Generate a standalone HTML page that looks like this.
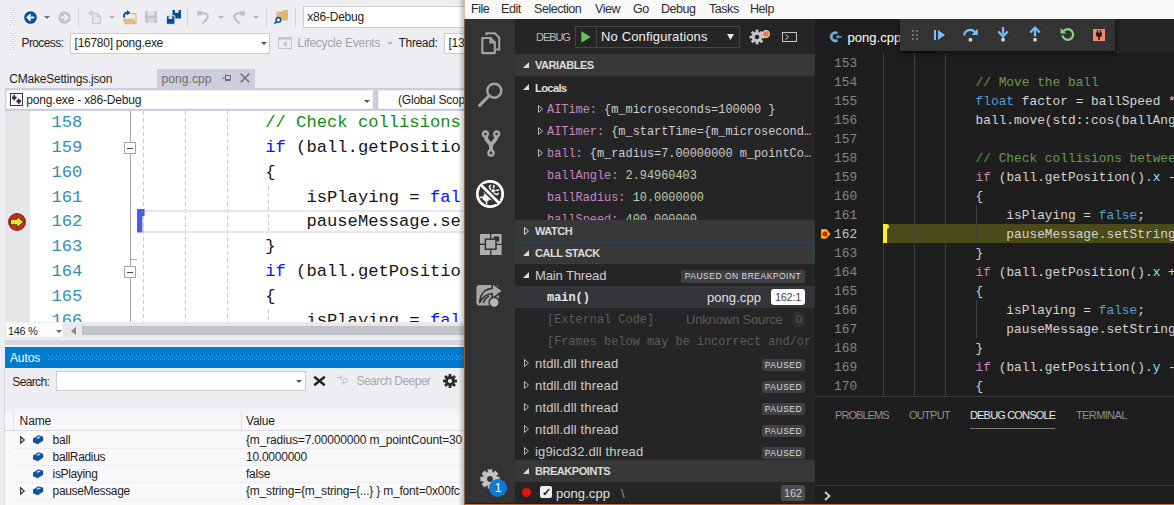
<!DOCTYPE html>
<html><head><meta charset="utf-8"><title>Debug</title>
<style>
*{box-sizing:border-box;margin:0;padding:0}
html,body{width:1174px;height:505px;overflow:hidden;background:#eeeef2}
body{position:relative;font-family:"Liberation Sans",sans-serif;font-size:12px;color:#1e1e1e}
.a{position:absolute;white-space:nowrap}
svg{position:absolute;overflow:visible}
.mono{font-family:"Liberation Mono",monospace}
/* ---------- Visual Studio (left) ---------- */
#vs{left:0;top:0;width:465px;height:505px;background:#eeeef2;overflow:hidden}
.vst{font-size:12px;letter-spacing:-0.35px;color:#1e1e1e;line-height:16px}
.combo{background:#fff;border:1px solid #ccced0}
.vsl{font-family:"Liberation Mono",monospace;font-size:17.17px;line-height:24.75px;height:24.75px;left:0;width:465px}
.vsl .n{position:absolute;left:47px;color:#3590ae}
.vsl .c{position:absolute;left:137.2px;white-space:pre;color:#151515}
.kw{color:#1010f0}.cm{color:#138a13}
/* ---------- VS Code (right) ---------- */
#vc{left:465px;top:0;width:709px;height:505px;background:#1e1e1e;overflow:hidden;color:#ccc}
#menu{z-index:5;left:0;top:0;width:709px;height:19px;background:#f8f8f8;color:#2c2c2c;font-size:12.5px;letter-spacing:-0.45px;line-height:18px}
#act{left:0;top:19px;width:50px;height:484px;background:#333}
#side{left:50px;top:19px;width:300px;height:484px;background:#252526;overflow:hidden}
.hdr{left:0;width:300px;height:22px;background:#383838;font-size:11px;font-weight:bold;color:#ddd;line-height:22px;letter-spacing:-0.45px}
.hdr span{position:absolute;left:20px}
.row{left:0;width:300px;height:22px;line-height:24px;font-size:13px;letter-spacing:-0.35px;color:#ccc}
.vr{font-family:"Liberation Mono",monospace;font-size:11.9px;letter-spacing:0;color:#ccc}
.vn{color:#c586c0}.vv{color:#b5cea8}
.badge{position:absolute;background:#4d4d4d;color:#ccc;font-size:10px;line-height:12px;height:12px;top:5px;padding:0 3px;border-radius:2px;letter-spacing:-0.2px}
#ed{left:350px;top:53px;width:359px;height:343px;background:#1e1e1e;overflow:hidden}
.l{left:0;width:359px;height:19px;line-height:19px;font-family:"Liberation Mono",monospace;font-size:12.83px;color:#d4d4d4}
.l .n{position:absolute;top:1px;left:19px;color:#858585}
.l .c{position:absolute;top:1px;left:68.2px;white-space:pre}
.gd{top:0;width:1px;height:343px;background:#404040}
.k{color:#569cd6}.k2{color:#c586c0}.g{color:#6a9955}.v{color:#9cdcfe}
</style></head><body>
<div id="vs" class="a">
<svg style="left:10px;top:8px" width="5" height="19" viewBox="0 0 5 19"><g fill="#b9bac4"><rect x="0" y="0" width="1" height="1"/><rect x="2" y="2" width="1" height="1"/><rect x="0" y="4" width="1" height="1"/><rect x="2" y="6" width="1" height="1"/><rect x="0" y="8" width="1" height="1"/><rect x="2" y="10" width="1" height="1"/><rect x="0" y="12" width="1" height="1"/><rect x="2" y="14" width="1" height="1"/><rect x="0" y="16" width="1" height="1"/><rect x="4" y="0" width="1" height="1"/><rect x="4" y="4" width="1" height="1"/><rect x="4" y="8" width="1" height="1"/><rect x="4" y="12" width="1" height="1"/><rect x="4" y="16" width="1" height="1"/></g></svg>
<svg style="left:23.5px;top:10.5px" width="13" height="13" viewBox="0 0 13 13"><circle cx="6.5" cy="6.5" r="6.3" fill="#00539c"/><path d="M10.2 6.5H4M6.6 3.4L3.5 6.5L6.6 9.6" fill="none" stroke="#fff" stroke-width="1.9"/></svg>
<svg style="left:43.5px;top:16px" width="6" height="3" viewBox="0 0 6 3"><path d="M0 0H6L3 3Z" fill="#717171"/></svg>
<svg style="left:57.5px;top:10.5px" width="13" height="13" viewBox="0 0 13 13"><circle cx="6.5" cy="6.5" r="6.3" fill="#c2c3cc"/><path d="M2.8 6.5H9M6.4 3.4L9.5 6.5L6.4 9.6" fill="none" stroke="#eeeef2" stroke-width="1.9"/></svg>
<div class="a" style="left:78px;top:8px;width:1px;height:19px;background:#d3d4dc"></div>
<svg style="left:88px;top:10px" width="14" height="14" viewBox="0 0 14 14"><path d="M4.5 3.5H9.5L12.5 6.5V13.5H4.5Z" fill="#e4e4ea" stroke="#c2c3cc"/><path d="M9.5 3.5V6.5H12.5" fill="none" stroke="#c2c3cc"/><path d="M3 0V6M0 3H6M1 1L5 5M5 1L1 5" stroke="#c8c9d2" stroke-width="1"/></svg>
<svg style="left:109px;top:16px" width="6" height="3" viewBox="0 0 6 3"><path d="M0 0H6L3 3Z" fill="#b4b5be"/></svg>
<svg style="left:121.5px;top:9.5px" width="15" height="15" viewBox="0 0 15 15"><path d="M8.2 3.6H14V13.8" fill="none" stroke="#dcb67a" stroke-width="1.1"/><path d="M0.6 8.8H12L14.2 14.3H2.6Z" fill="#e0ba7e"/><path d="M2.2 7.6C1.4 4 3.2 2.5 6 2.7" fill="none" stroke="#0c4c92" stroke-width="1.9"/><path d="M5 0L8.4 2.7L5 5.4Z" fill="#0c4c92"/></svg>
<svg style="left:144.5px;top:11px" width="12" height="12" viewBox="0 0 12 12"><path d="M0 0H12V12H1.5L0 10.5Z" fill="#c2c3cc"/><rect x="2.5" y="0" width="7" height="4.5" fill="#e4e4ea"/><rect x="3" y="7.5" width="6" height="4.5" fill="#d6d7de"/></svg>
<svg style="left:165.5px;top:9.5px" width="15" height="15" viewBox="0 0 15 15"><path d="M6.5 0H15V8.5H7.4L6.5 7.6Z" fill="#0c4c92"/><rect x="9" y="0" width="3.6" height="2.8" fill="#e4e8f0"/><path d="M0.4 5.8H8.9V14.3H1.3L0.4 13.4Z" fill="#0c4c92" stroke="#eeeef2" stroke-width="0.9"/><rect x="2.6" y="6.2" width="3.6" height="2.8" fill="#e4e8f0"/></svg>
<div class="a" style="left:187px;top:8px;width:1px;height:19px;background:#d3d4dc"></div>
<svg style="left:196.5px;top:10px" width="13" height="14" viewBox="0 0 13 14"><path d="M3 4.6C6 2.4 10.6 3 10.8 6.6C10.8 9.6 7.8 11 5.4 13.2" fill="none" stroke="#bdbec8" stroke-width="2.1"/><path d="M0 1L6 1.2L1 7Z" fill="#bdbec8"/></svg>
<svg style="left:218px;top:16px" width="6" height="3" viewBox="0 0 6 3"><path d="M0 0H6L3 3Z" fill="#b4b5be"/></svg>
<svg style="left:231.5px;top:10px" width="13" height="14" viewBox="0 0 13 14"><path d="M10 4.6C7 2.4 2.4 3 2.2 6.6C2.2 9.6 5.2 11 7.6 13.2" fill="none" stroke="#bdbec8" stroke-width="2.1"/><path d="M13 1L7 1.2L12 7Z" fill="#bdbec8"/></svg>
<svg style="left:253px;top:16px" width="6" height="3" viewBox="0 0 6 3"><path d="M0 0H6L3 3Z" fill="#b4b5be"/></svg>
<div class="a" style="left:265.5px;top:8px;width:1px;height:19px;background:#d3d4dc"></div>
<svg style="left:274px;top:9px" width="16" height="15" viewBox="0 0 16 15"><path d="M2.5 2.4H8.6L9.4 1H14V11.5H2.5Z" fill="#dfb978"/><circle cx="4.4" cy="10.9" r="2.3" fill="#eeeef2" stroke="#0e4f94" stroke-width="1.5"/><path d="M2.8 12.6L0.5 14.6" stroke="#0e4f94" stroke-width="1.7"/></svg>
<div class="a" style="left:295px;top:8px;width:1px;height:19px;background:#d3d4dc"></div>
<div class="a combo" style="left:303px;top:6px;width:170px;height:22px"></div>
<div class="a" style="left:307.3px;top:9.3px;font-size:12px;line-height:16px;letter-spacing:-0.23px;color:#1e1e1e;">x86-Debug</div>
<svg style="left:10px;top:33px" width="5" height="19" viewBox="0 0 5 19"><g fill="#b9bac4"><rect x="0" y="0" width="1" height="1"/><rect x="2" y="2" width="1" height="1"/><rect x="0" y="4" width="1" height="1"/><rect x="2" y="6" width="1" height="1"/><rect x="0" y="8" width="1" height="1"/><rect x="2" y="10" width="1" height="1"/><rect x="0" y="12" width="1" height="1"/><rect x="2" y="14" width="1" height="1"/><rect x="0" y="16" width="1" height="1"/><rect x="4" y="0" width="1" height="1"/><rect x="4" y="4" width="1" height="1"/><rect x="4" y="8" width="1" height="1"/><rect x="4" y="12" width="1" height="1"/><rect x="4" y="16" width="1" height="1"/></g></svg>
<div class="a" style="left:21.5px;top:35px;font-size:12px;line-height:16px;letter-spacing:-0.6px;color:#1e1e1e;">Process:</div>
<div class="a combo" style="left:70px;top:32.5px;width:199.5px;height:21px"></div>
<div class="a" style="left:74.6px;top:35px;font-size:12px;line-height:16px;letter-spacing:-0.27px;color:#1e1e1e;">[16780] pong.exe</div>
<svg style="left:260.5px;top:42px" width="6" height="3" viewBox="0 0 6 3"><path d="M0 0H6L3 3Z" fill="#555"/></svg>
<svg style="left:278px;top:37px" width="14" height="12" viewBox="0 0 14 12"><rect x="0.5" y="0.5" width="13" height="11" fill="none" stroke="#c2c3cc"/><rect x="0" y="0" width="14" height="2.6" fill="#c2c3cc"/><path d="M9 4.5L5.5 7L9 9.5M5.5 7H10" fill="none" stroke="#c2c3cc" stroke-width="1.1"/></svg>
<div class="a" style="left:297.5px;top:35px;font-size:12px;line-height:16px;letter-spacing:-0.25px;color:#a2a4a5;">Lifecycle Events</div>
<svg style="left:386.5px;top:42px" width="6" height="3" viewBox="0 0 6 3"><path d="M0 0H6L3 3Z" fill="#b4b5be"/></svg>
<div class="a" style="left:398.6px;top:35px;font-size:12px;line-height:16px;letter-spacing:-0.35px;color:#1e1e1e;">Thread:</div>
<div class="a combo" style="left:443.5px;top:32.5px;width:40px;height:21px"></div>
<div class="a" style="left:448.5px;top:35px;font-size:12px;line-height:16px;letter-spacing:-0.27px;color:#1e1e1e;">[13</div>
<div class="a" style="left:9.2px;top:70.5px;font-size:12px;line-height:16px;letter-spacing:-0.2px;color:#1e1e1e;">CMakeSettings.json</div>
<div class="a" style="left:157px;top:68.5px;width:97.5px;height:20px;background:#ccceDB"></div>
<div class="a" style="left:161.5px;top:70.5px;font-size:12px;line-height:16px;letter-spacing:0.09px;color:#6d6d70;">pong.cpp</div>
<svg style="left:222px;top:74px" width="9" height="8" viewBox="0 0 9 8"><path d="M0 4H3.5M3.5 0.5V7.5M3.5 1.5H8.5V5.5H3.5M3.5 6.5H8.5" fill="none" stroke="#6d6d70" stroke-width="1"/></svg>
<svg style="left:240px;top:73px" width="10" height="10" viewBox="0 0 10 10"><path d="M0.7 0.7L9.3 9.3M9.3 0.7L0.7 9.3" stroke="#66666c" stroke-width="1.3"/></svg>
<div class="a" style="left:4.5px;top:87.5px;width:465px;height:23.3px;background:#ccceDB"></div>
<div class="a" style="left:5.8px;top:90px;width:367.2px;height:19.3px;background:#fff;border:1px solid #eeeef4"></div>
<div class="a" style="left:378px;top:90px;width:95px;height:19.3px;background:#fff;border:1px solid #eeeef4"></div>
<svg style="left:10px;top:93px" width="13" height="13" viewBox="0 0 13 13"><rect x="0.5" y="0.5" width="12" height="12" fill="#fff" stroke="#3b2a4a"/><path d="M2 3.5H6.5V6H2ZM6.5 7H11V9.5H6.5Z" fill="#3b2a4a"/><path d="M4.2 1.8V7.6M8.7 5.4V11.2" stroke="#3b2a4a" stroke-width="1.6"/></svg>
<div class="a" style="left:26.3px;top:92.4px;font-size:12px;line-height:16px;letter-spacing:-0.19px;color:#1e1e1e;">pong.exe - x86-Debug</div>
<svg style="left:364px;top:99.5px" width="6" height="3" viewBox="0 0 6 3"><path d="M0 0H6L3 3Z" fill="#555"/></svg>
<div class="a" style="left:398px;top:92.4px;font-size:12px;line-height:16px;letter-spacing:-0.2px;color:#1e1e1e;">(Global Scop</div>
<div class="a" style="left:4.5px;top:110.8px;width:470px;height:211.6px;background:#fff;overflow:hidden">
<div class="a" style="left:0;top:0;width:25.5px;height:213px;background:#e6e7e8"></div>
<div class="a" style="left:125px;top:0;width:1px;height:213px;background:#a5a5a5"></div>
<div class="a" style="left:138.8px;top:0;width:1px;height:213px;background:repeating-linear-gradient(to bottom,#cdcdcd 0 4px,transparent 4px 7px)"></div>
<div class="a" style="left:180.5px;top:0;width:1px;height:213px;background:repeating-linear-gradient(to bottom,#cdcdcd 0 4px,transparent 4px 7px)"></div>
<div class="a" style="left:222.1px;top:0;width:1px;height:213px;background:repeating-linear-gradient(to bottom,#cdcdcd 0 4px,transparent 4px 7px)"></div>
<div class="a" style="left:263.7px;top:74.95px;width:1px;height:49.5px;background:repeating-linear-gradient(to bottom,#cdcdcd 0 4px,transparent 4px 7px)"></div>
<div class="a" style="left:263.7px;top:198.7px;width:1px;height:49.5px;background:repeating-linear-gradient(to bottom,#cdcdcd 0 4px,transparent 4px 7px)"></div>
<div class="a" style="left:139.5px;top:98.8px;width:340px;height:23.2px;border:2px solid #e6e6f2;border-left:none"></div>
<svg style="left:132.5px;top:98.4px" width="8" height="24" viewBox="0 0 8 24"><path d="M0 0H7.6V7H5.4V23.4H0Z" fill="#4a5ee6"/></svg>
<div class="a vsl" style="top:0.7px"><span class="n">158</span><span class="c">            <span class="cm">// Check collisions</span></span></div>
<div class="a vsl" style="top:25.45px"><span class="n">159</span><span class="c">            <span class="kw">if</span> (ball.getPositio</span></div>
<div class="a vsl" style="top:50.2px"><span class="n">160</span><span class="c">            {</span></div>
<div class="a vsl" style="top:74.95px"><span class="n">161</span><span class="c">                isPlaying = <span class="kw">fal</span></span></div>
<div class="a vsl" style="top:99.7px"><span class="n">162</span><span class="c">                pauseMessage.se</span></div>
<div class="a vsl" style="top:124.45px"><span class="n">163</span><span class="c">            }</span></div>
<div class="a vsl" style="top:149.2px"><span class="n">164</span><span class="c">            <span class="kw">if</span> (ball.getPositio</span></div>
<div class="a vsl" style="top:173.95px"><span class="n">165</span><span class="c">            {</span></div>
<div class="a vsl" style="top:198.7px"><span class="n">166</span><span class="c">                isPlaying = <span class="kw">fal</span></span></div>
<div class="a" style="left:119px;top:31.4px;width:12px;height:12px;background:#fff;border:1px solid #a5a5a5"></div>
<div class="a" style="left:122px;top:36.8px;width:6px;height:1.4px;background:#444"></div>
<div class="a" style="left:119px;top:155.6px;width:12px;height:12px;background:#fff;border:1px solid #a5a5a5"></div>
<div class="a" style="left:122px;top:161px;width:6px;height:1.4px;background:#444"></div>
<div class="a" style="left:125px;top:148.6px;width:7px;height:1px;background:#a5a5a5"></div>
<svg style="left:3.7px;top:102.2px" width="18" height="18" viewBox="0 0 18 18"><circle cx="9" cy="9" r="8.3" fill="#d42a2a" stroke="#8e1c14" stroke-width="1.2"/><path d="M2.4 6.2H8.8V2.8L15.8 9L8.8 15.2V11.8H2.4Z" fill="#ffd83c" stroke="#5a3c10" stroke-width="1.1" stroke-linejoin="round"/></svg>
</div>
<div class="a" style="left:4.5px;top:322.5px;width:470px;height:15.5px;background:#e8e8ec"></div>
<div class="a" style="left:5px;top:322.5px;width:59px;height:15.5px;background:#fcfcfc;border:1px solid #e3e4ea;border-top:none"></div>
<div class="a" style="left:7.9px;top:322.7px;font-size:11px;line-height:16px;letter-spacing:-0.3px;color:#1e1e1e;">146 %</div>
<svg style="left:56px;top:330px" width="6" height="3" viewBox="0 0 6 3"><path d="M0 0H6L3 3Z" fill="#666"/></svg>
<svg style="left:71px;top:327px" width="5" height="8" viewBox="0 0 5 8"><path d="M5 0V8L0 4Z" fill="#86868e"/></svg>
<div class="a" style="left:82px;top:326px;width:400px;height:9px;background:#c2c3c9"></div>
<div class="a" style="left:4.5px;top:339.5px;width:465px;height:5px;background:#d3d7e4"></div>
<div class="a" style="left:5px;top:347px;width:470px;height:21px;background:#007acc"></div>
<div class="a" style="left:9.9px;top:349.6px;font-size:12px;line-height:16px;letter-spacing:-0.08px;color:#fff;">Autos</div>
<div class="a" style="left:47.5px;top:354.5px;width:420px;height:6px;background-image:radial-gradient(circle at 0.5px 0.5px,#63b0e4 0.55px,transparent 0.8px),radial-gradient(circle at 0.5px 0.5px,#63b0e4 0.55px,transparent 0.8px);background-size:4px 4px;background-position:0 0,2px 2px"></div>
<div class="a" style="left:12.3px;top:373.5px;font-size:12px;line-height:16px;letter-spacing:-0.65px;color:#1e1e1e;">Search:</div>
<div class="a combo" style="left:56px;top:371px;width:250px;height:19.5px"></div>
<svg style="left:296px;top:380px" width="6" height="3" viewBox="0 0 6 3"><path d="M0 0H6L3 3Z" fill="#555"/></svg>
<svg style="left:313px;top:376px" width="13" height="10" viewBox="0 0 13 10"><path d="M1.2 0.8L11.8 9.2M11.8 0.8L1.2 9.2" stroke="#222" stroke-width="2.4"/></svg>
<svg style="left:337px;top:375px" width="12" height="10" viewBox="0 0 12 10"><path d="M0 2.5H5M3 0.5L5.2 2.5L3 4.5" fill="none" stroke="#b9bac4" stroke-width="1"/><circle cx="8.2" cy="5.6" r="2.2" fill="none" stroke="#b9bac4"/><path d="M6.6 7.2L4.8 9.4" stroke="#b9bac4" stroke-width="1.2"/></svg>
<div class="a" style="left:356.4px;top:373.4px;font-size:12px;line-height:16px;letter-spacing:-0.5px;color:#a6a8b0;">Search Deeper</div>
<svg style="left:443px;top:374px" width="14" height="14" viewBox="0 0 14 14"><g fill="#2d2d30"><circle cx="7" cy="7" r="4.9"/><g><rect x="5.6" y="0" width="2.8" height="3"/><rect x="5.6" y="11" width="2.8" height="3"/></g><g transform="rotate(45 7 7)"><rect x="5.6" y="0" width="2.8" height="3"/><rect x="5.6" y="11" width="2.8" height="3"/></g><g transform="rotate(90 7 7)"><rect x="5.6" y="0" width="2.8" height="3"/><rect x="5.6" y="11" width="2.8" height="3"/></g><g transform="rotate(135 7 7)"><rect x="5.6" y="0" width="2.8" height="3"/><rect x="5.6" y="11" width="2.8" height="3"/></g></g><circle cx="7" cy="7" r="2.1" fill="#eeeef2"/></svg>
<div class="a" style="left:5px;top:407px;width:470px;height:23.5px;background:linear-gradient(to bottom,#eeeef2 0,#f6f6f9 30%,#f9f9fb 100%);border-bottom:1px solid #dcdde4"></div>
<div class="a" style="left:5px;top:430.5px;width:470px;height:75px;background:#f9f9fb"></div>
<div class="a" style="left:241px;top:411px;width:1px;height:19px;background:#dedfe6"></div>
<div class="a" style="left:13px;top:410px;width:1px;height:20px;background:#e2e3ea"></div>
<div class="a" style="left:4px;top:368px;width:1px;height:137px;background:#d8dae2"></div>
<div class="a" style="left:19.6px;top:413.2px;font-size:12px;line-height:16px;letter-spacing:-0.13px;color:#1e1e1e;">Name</div>
<div class="a" style="left:246px;top:413.2px;font-size:12px;line-height:16px;letter-spacing:-0.22px;color:#1e1e1e;">Value</div>
<svg style="left:19.5px;top:435.8px" width="5" height="8" viewBox="0 0 5 8"><path d="M0.6 0.8L4.2 4L0.6 7.2Z" fill="none" stroke="#333" stroke-width="1.2"/></svg>
<svg style="left:33px;top:434.8px" width="11" height="10" viewBox="0 0 11 10"><path d="M0 3.6L5.4 0.2L10.2 1.8V5.8L4.6 9.2L0 7.2Z" fill="#15529e"/><path d="M3 3L5.6 1.4L7.8 2.2L5.2 3.8Z" fill="#b4dcf8"/></svg>
<div class="a" style="left:52.6px;top:431.8px;font-size:12px;line-height:16px;letter-spacing:-0.2px;color:#1e1e1e;">ball</div>
<div class="a" style="left:246px;top:431.8px;font-size:12px;line-height:16px;letter-spacing:-0.17px;color:#1e1e1e;">{m_radius=7.00000000 m_pointCount=30</div>
<div class="a" style="left:14px;top:448px;width:460px;height:1px;background:#ececf2"></div>
<svg style="left:33px;top:451.8px" width="11" height="10" viewBox="0 0 11 10"><path d="M0 3.6L5.4 0.2L10.2 1.8V5.8L4.6 9.2L0 7.2Z" fill="#15529e"/><path d="M3 3L5.6 1.4L7.8 2.2L5.2 3.8Z" fill="#b4dcf8"/></svg>
<div class="a" style="left:52.6px;top:448.8px;font-size:12px;line-height:16px;letter-spacing:-0.35px;color:#1e1e1e;">ballRadius</div>
<div class="a" style="left:246px;top:448.8px;font-size:12px;line-height:16px;letter-spacing:-0.25px;color:#1e1e1e;">10.0000000</div>
<div class="a" style="left:14px;top:465px;width:460px;height:1px;background:#ececf2"></div>
<svg style="left:33px;top:468.8px" width="11" height="10" viewBox="0 0 11 10"><path d="M0 3.6L5.4 0.2L10.2 1.8V5.8L4.6 9.2L0 7.2Z" fill="#15529e"/><path d="M3 3L5.6 1.4L7.8 2.2L5.2 3.8Z" fill="#b4dcf8"/></svg>
<div class="a" style="left:52.6px;top:465.8px;font-size:12px;line-height:16px;letter-spacing:-0.35px;color:#1e1e1e;">isPlaying</div>
<div class="a" style="left:246px;top:465.8px;font-size:12px;line-height:16px;letter-spacing:-0.25px;color:#1e1e1e;">false</div>
<div class="a" style="left:14px;top:482px;width:460px;height:1px;background:#ececf2"></div>
<svg style="left:19.5px;top:486.8px" width="5" height="8" viewBox="0 0 5 8"><path d="M0.6 0.8L4.2 4L0.6 7.2Z" fill="none" stroke="#333" stroke-width="1.2"/></svg>
<svg style="left:33px;top:485.8px" width="11" height="10" viewBox="0 0 11 10"><path d="M0 3.6L5.4 0.2L10.2 1.8V5.8L4.6 9.2L0 7.2Z" fill="#15529e"/><path d="M3 3L5.6 1.4L7.8 2.2L5.2 3.8Z" fill="#b4dcf8"/></svg>
<div class="a" style="left:52.6px;top:482.8px;font-size:12px;line-height:16px;letter-spacing:-0.35px;color:#1e1e1e;">pauseMessage</div>
<div class="a" style="left:246px;top:482.8px;font-size:12px;line-height:16px;letter-spacing:-0.2px;color:#1e1e1e;">{m_string={m_string={...} } m_font=0x00fc</div>
<div class="a" style="left:14px;top:499px;width:460px;height:1px;background:#ececf2"></div>
<div class="a" style="left:458px;top:0;width:7px;height:505px;background:linear-gradient(to right,rgba(60,50,40,0),rgba(60,50,40,0.35))"></div>
<div class="a" style="left:464px;top:0;width:1px;height:19px;background:#dcc0a0"></div><div class="a" style="left:464px;top:19px;width:1px;height:486px;background:#8c6440"></div>
</div>
<div id="vc" class="a">
<div id="menu" class="a">
 <span class="a" style="left:6px">File</span><span class="a" style="left:36px">Edit</span><span class="a" style="left:69px">Selection</span><span class="a" style="left:130px">View</span><span class="a" style="left:168px">Go</span><span class="a" style="left:196px">Debug</span><span class="a" style="left:244px">Tasks</span><span class="a" style="left:285px">Help</span>
</div>
<div id="act" class="a">
 <!-- files -->
 <svg style="left:16px;top:12.8px" width="19.6" height="22.6" viewBox="0 0 22 25"><path d="M6 3.5V1.2H15.5L20.5 6.2V19.5H16.5" fill="none" stroke="#a4a4a4" stroke-width="2.2"/><path d="M1.5 6.5H10.5V11.5H15.5V23.5H1.5Z" fill="none" stroke="#a4a4a4" stroke-width="2.4" stroke-linejoin="round"/><path d="M10.5 6.5L15.5 11.5" stroke="#a4a4a4" stroke-width="2.4"/></svg>
 <!-- search -->
 <svg style="left:13px;top:63px" width="25" height="25" viewBox="0 0 25 25"><circle cx="16.3" cy="8.7" r="7" fill="none" stroke="#a4a4a4" stroke-width="2.4"/><path d="M11.2 13.8L1.6 23.4" stroke="#a4a4a4" stroke-width="3" stroke-linecap="round"/></svg>
 <!-- git -->
 <svg style="left:16px;top:111px" width="20" height="27" viewBox="0 0 20 27"><g fill="none" stroke="#a8a8a8" stroke-width="2.3"><circle cx="4.4" cy="4" r="2.5"/><circle cx="15.6" cy="4" r="2.5"/><circle cx="10" cy="23" r="2.6"/></g><path d="M4.6 6.8C4.8 11.5 10 12.5 10 16.5V20M15.4 6.8C15.2 11.5 10 12.5 10 16.5" fill="none" stroke="#a8a8a8" stroke-width="3.8"/></svg>
 <!-- debug (active) -->
 <svg style="left:10px;top:160px" width="30" height="30" viewBox="0 0 30 30"><circle cx="15" cy="15" r="12.7" fill="none" stroke="#fff" stroke-width="2.7"/><g transform="rotate(45 15 15)"><ellipse cx="15" cy="20" rx="3.7" ry="4" fill="#fff"/><path d="M15 14V9" stroke="#fff" stroke-width="3"/><g stroke="#fff" stroke-width="1.5" fill="none"><path d="M13.6 8.6L11.4 5.6M16.4 8.6L18.6 5.6M13.4 12L9.4 10.4V8M16.6 12L20.6 10.4V8M11.6 18.4L8 17M18.4 18.4L22 17M12.4 22.6L10 24.6M17.6 22.6L20 24.6"/></g></g><path d="M6.6 6.6L23.4 23.4" stroke="#333" stroke-width="6"/><path d="M6 6L24 24" stroke="#fff" stroke-width="2.7"/></svg>
 <!-- extensions -->
 <svg style="left:15px;top:215px" width="22" height="21" viewBox="0 0 22 21"><g fill="#adadad"><rect x="0" y="0" width="10" height="9.6"/><rect x="0" y="11" width="10" height="10"/><rect x="11.4" y="11" width="10.2" height="10"/></g><rect x="12.6" y="1.2" width="7.8" height="7.4" fill="none" stroke="#adadad" stroke-width="2.4"/><rect x="5.4" y="5.2" width="10.6" height="10" fill="#adadad" stroke="#333" stroke-width="1.5"/></svg>
 <!-- share -->
 <svg style="left:11px;top:262px" width="28" height="26" viewBox="0 0 28 26"><rect x="0.4" y="4" width="22.4" height="20.6" rx="3" fill="#a6a6a6"/><path d="M3.6 21.5C4.2 12.5 9.5 8 16.2 7.4V2.2L27 10L16.2 17.6V12.8C10.5 13.2 6.6 16 3.6 21.5Z" fill="#a6a6a6" stroke="#333" stroke-width="1.6" stroke-linejoin="round"/><path d="M7.4 22C8.2 18.2 10 16.4 13 15.2" fill="none" stroke="#333" stroke-width="1.5"/><circle cx="18.2" cy="21.4" r="5" fill="#b8b8b8" stroke="#333" stroke-width="1.5"/></svg>
 <!-- settings gear -->
 <svg style="left:15px;top:449.5px" width="20" height="20" viewBox="0 0 20 20"><g fill="#c2c2c2"><circle cx="10" cy="10" r="7.2"/><g><rect x="7.7" y="0.4" width="4.6" height="4"/><rect x="7.7" y="15.6" width="4.6" height="4"/></g><g transform="rotate(45 10 10)"><rect x="7.7" y="0.4" width="4.6" height="4"/><rect x="7.7" y="15.6" width="4.6" height="4"/></g><g transform="rotate(90 10 10)"><rect x="7.7" y="0.4" width="4.6" height="4"/><rect x="7.7" y="15.6" width="4.6" height="4"/></g><g transform="rotate(135 10 10)"><rect x="7.7" y="0.4" width="4.6" height="4"/><rect x="7.7" y="15.6" width="4.6" height="4"/></g></g><circle cx="10" cy="10" r="2.9" fill="#333"/></svg>
 <div class="a" style="left:24px;top:460px;width:18px;height:18px;border-radius:9px;background:#0e7ad3;color:#fff;font-size:12px;line-height:18px;text-align:center">1</div>
</div>
<div id="side" class="a">
 <!-- title -->
 <div class="a" style="left:21px;top:10px;font-size:11px;letter-spacing:-1.05px;color:#bbb;line-height:16px">DEBUG</div>
 <div class="a" style="left:60px;top:7px;width:165px;height:22px;border:1px solid #454545;background:#252526"></div>
 <div class="a" style="left:81px;top:8px;width:1px;height:20px;background:#454545"></div>
 <svg style="left:66px;top:12px" width="10" height="12" viewBox="0 0 10 12"><path d="M0.3 0.2L9.8 6L0.3 11.8Z" fill="#62c554"/></svg>
 <div class="a" style="left:86px;top:9px;font-size:13px;letter-spacing:0.15px;color:#f0f0f0;line-height:18px">No Configurations</div>
 <svg style="left:212px;top:14.5px" width="7" height="6" viewBox="0 0 7 6"><path d="M0 0H7L3.5 6Z" fill="#e8e8e8"/></svg>
 <!-- gear + dot -->
 <svg style="left:234px;top:10px" width="16" height="16" viewBox="0 0 16 16"><g fill="#c5c5c5"><circle cx="8" cy="8" r="5.2"/><g><rect x="6.6" y="0.6" width="2.8" height="3" /><rect x="6.6" y="12.4" width="2.8" height="3"/></g><g transform="rotate(45 8 8)"><rect x="6.6" y="0.6" width="2.8" height="3" /><rect x="6.6" y="12.4" width="2.8" height="3"/></g><g transform="rotate(90 8 8)"><rect x="6.6" y="0.6" width="2.8" height="3" /><rect x="6.6" y="12.4" width="2.8" height="3"/></g><g transform="rotate(135 8 8)"><rect x="6.6" y="0.6" width="2.8" height="3" /><rect x="6.6" y="12.4" width="2.8" height="3"/></g></g><circle cx="8" cy="8" r="2.3" fill="#252526"/></svg>
 <div class="a" style="left:247px;top:11px;width:8px;height:8px;border-radius:4px;background:#e8794a;border:1px solid #f0e6e0"></div>
 <!-- terminal icon -->
 <div class="a" style="left:267px;top:13px;width:15px;height:10px;border:1px solid #c5c5c5"></div>
 <svg style="left:270px;top:15px" width="5" height="6" viewBox="0 0 5 6"><path d="M0.5 0.5L3.5 3L0.5 5.5" fill="none" stroke="#c5c5c5" stroke-width="1"/></svg>

 <!-- VARIABLES -->
 <div class="a hdr" style="top:35px"><svg style="left:8px;top:8px" width="6" height="6" viewBox="0 0 6 6"><path d="M6 0V6H0Z" fill="#ddd"/></svg><span>VARIABLES</span></div>
 <div class="a row" style="top:57px;font-size:11px;font-weight:bold;letter-spacing:-0.55px;color:#e0e0e0"><svg style="left:8px;top:8px" width="6" height="6" viewBox="0 0 6 6"><path d="M6 0V6H0Z" fill="#ddd"/></svg><span class="a" style="left:20px">Locals</span></div>
 <div class="a row vr" style="top:79px"><svg style="left:23px;top:7px" width="5" height="8" viewBox="0 0 5 8"><path d="M0.5 0.5L4.5 4L0.5 7.5Z" fill="none" stroke="#bbb"/></svg><span class="a" style="left:32px"><span class="vn">AITime:</span> {m_microseconds=100000 }</span></div>
 <div class="a row vr" style="top:101px"><svg style="left:23px;top:7px" width="5" height="8" viewBox="0 0 5 8"><path d="M0.5 0.5L4.5 4L0.5 7.5Z" fill="none" stroke="#bbb"/></svg><span class="a" style="left:32px"><span class="vn">AITimer:</span> {m_startTime={m_microsecond…</span></div>
 <div class="a row vr" style="top:123px"><svg style="left:23px;top:7px" width="5" height="8" viewBox="0 0 5 8"><path d="M0.5 0.5L4.5 4L0.5 7.5Z" fill="none" stroke="#bbb"/></svg><span class="a" style="left:32px"><span class="vn">ball:</span> {m_radius=7.00000000 m_pointCo…</span></div>
 <div class="a row vr" style="top:145px"><span class="a" style="left:32px"><span class="vn">ballAngle:</span> <span class="vv">2.94960403</span></span></div>
 <div class="a row vr" style="top:167px"><span class="a" style="left:32px"><span class="vn">ballRadius:</span> <span class="vv">10.0000000</span></span></div>
 <div class="a row vr" style="top:189px"><span class="a" style="left:32px"><span class="vn">ballSpeed:</span> <span class="vv">400.000000</span></span></div>

 <!-- WATCH -->
 <div class="a hdr" style="top:201px"><svg style="left:9px;top:7px" width="5" height="8" viewBox="0 0 5 8"><path d="M0.5 0.5L4.5 4L0.5 7.5Z" fill="none" stroke="#ddd"/></svg><span>WATCH</span></div>
 <!-- CALL STACK -->
 <div class="a hdr" style="top:223px;border:1px solid #27444f;line-height:20px"><svg style="left:7px;top:7px" width="6" height="6" viewBox="0 0 6 6"><path d="M6 0V6H0Z" fill="#ddd"/></svg><span style="left:19px">CALL STACK</span></div>
 <div class="a row" style="top:245px"><svg style="left:8px;top:8px" width="6" height="6" viewBox="0 0 6 6"><path d="M6 0V6H0Z" fill="#ddd"/></svg><span class="a" style="left:20px;letter-spacing:-0.13px">Main Thread</span><span class="badge" style="left:166px;width:124px;top:5.5px;height:13px;line-height:13.5px;font-size:8.5px;letter-spacing:0.5px;padding:0;text-align:center;background:#3f4043;color:#dcdcdc">PAUSED ON BREAKPOINT</span></div>
 <div class="a row" style="top:267px;background:#34353a"><span class="a mono" style="left:32px;font-size:11.9px;letter-spacing:0;color:#e8e8e8;font-weight:bold">main()</span><span class="a" style="left:192px;letter-spacing:0.06px;color:#e0e0e0">pong.cpp</span><span class="badge" style="left:256px;width:34px;top:3.2px;height:15.6px;line-height:16px;font-size:11px;letter-spacing:-0.3px;padding:0;text-align:center;background:#fff;color:#444;border-radius:3px">162:1</span></div>
 <div class="a row" style="top:289px;color:#5c5c5c"><span class="a mono" style="left:32px;font-size:11.9px;letter-spacing:0">[External Code]</span><span class="a" style="left:171px;letter-spacing:-0.17px">Unknown Source</span><span class="badge" style="left:278px;width:12px;top:4px;height:15px;line-height:15px;font-size:11px;text-align:center;background:#2f2f2f;color:#5c5c5c;padding:0">0</span></div>
 <div class="a row" style="top:311px;color:#5c5c5c"><span class="a mono" style="left:32px;font-size:11.9px;letter-spacing:0">[Frames below may be incorrect and/or</span></div>
 <div class="a row" style="top:333px"><svg style="left:9px;top:7px" width="5" height="8" viewBox="0 0 5 8"><path d="M0.5 0.5L4.5 4L0.5 7.5Z" fill="none" stroke="#bbb"/></svg><span class="a" style="left:20px;letter-spacing:0.15px">ntdll.dll thread</span><span class="badge" style="left:247px;width:43px;top:6.5px;height:12px;line-height:12.5px;font-size:8.5px;letter-spacing:0.5px;padding:0;text-align:center;background:#3f4043;color:#dcdcdc">PAUSED</span></div>
 <div class="a row" style="top:355px"><svg style="left:9px;top:7px" width="5" height="8" viewBox="0 0 5 8"><path d="M0.5 0.5L4.5 4L0.5 7.5Z" fill="none" stroke="#bbb"/></svg><span class="a" style="left:20px;letter-spacing:0.15px">ntdll.dll thread</span><span class="badge" style="left:247px;width:43px;top:6.5px;height:12px;line-height:12.5px;font-size:8.5px;letter-spacing:0.5px;padding:0;text-align:center;background:#3f4043;color:#dcdcdc">PAUSED</span></div>
 <div class="a row" style="top:377px"><svg style="left:9px;top:7px" width="5" height="8" viewBox="0 0 5 8"><path d="M0.5 0.5L4.5 4L0.5 7.5Z" fill="none" stroke="#bbb"/></svg><span class="a" style="left:20px;letter-spacing:0.15px">ntdll.dll thread</span><span class="badge" style="left:247px;width:43px;top:6.5px;height:12px;line-height:12.5px;font-size:8.5px;letter-spacing:0.5px;padding:0;text-align:center;background:#3f4043;color:#dcdcdc">PAUSED</span></div>
 <div class="a row" style="top:399px"><svg style="left:9px;top:7px" width="5" height="8" viewBox="0 0 5 8"><path d="M0.5 0.5L4.5 4L0.5 7.5Z" fill="none" stroke="#bbb"/></svg><span class="a" style="left:20px;letter-spacing:0.15px">ntdll.dll thread</span><span class="badge" style="left:247px;width:43px;top:6.5px;height:12px;line-height:12.5px;font-size:8.5px;letter-spacing:0.5px;padding:0;text-align:center;background:#3f4043;color:#dcdcdc">PAUSED</span></div>
 <div class="a row" style="top:421px"><svg style="left:9px;top:7px" width="5" height="8" viewBox="0 0 5 8"><path d="M0.5 0.5L4.5 4L0.5 7.5Z" fill="none" stroke="#bbb"/></svg><span class="a" style="left:20px;letter-spacing:0.15px">ig9icd32.dll thread</span><span class="badge" style="left:247px;width:43px;top:6.5px;height:12px;line-height:12.5px;font-size:8.5px;letter-spacing:0.5px;padding:0;text-align:center;background:#3f4043;color:#dcdcdc">PAUSED</span></div>
 <!-- BREAKPOINTS -->
 <div class="a hdr" style="top:441px"><svg style="left:8px;top:8px" width="6" height="6" viewBox="0 0 6 6"><path d="M6 0V6H0Z" fill="#ddd"/></svg><span>BREAKPOINTS</span></div>
 <div class="a row" style="top:463px"><div class="a" style="left:7px;top:6px;width:9px;height:9px;border-radius:5px;background:#e51400"></div><div class="a" style="left:25px;top:4px;width:12px;height:12px;background:#f0f0f0;border-radius:2px;color:#222;font-size:11px;line-height:12px;text-align:center;font-weight:bold">✓</div><span class="a" style="left:41px;letter-spacing:0.06px;color:#e0e0e0">pong.cpp</span><span class="a" style="left:106px;color:#999">\</span><span class="badge" style="left:266px;width:24px;top:3px;height:16px;line-height:16px;font-size:11px;text-align:center">162</span></div>
</div>
<div id="ed" class="a">
<div class="a" style="left:68px;top:171px;width:291px;height:19px;background:#4b4a1a"></div>
<div class="a gd" style="left:68px"></div>
<div class="a gd" style="left:99px"></div>
<div class="a gd" style="left:130px"></div>
<div class="a gd" style="left:161px;top:152px;height:38px"></div>
<div class="a gd" style="left:161px;top:247px;height:38px"></div>
<div class="a" style="left:68px;top:171px;width:4px;height:19px;background:#ffee22;border-radius:0 0 0 0"></div><div class="a" style="left:70px;top:171px;width:4px;height:5px;background:#ffee22;border-radius:0 3px 3px 0"></div>
<div class="a l" style="top:0px"><span class="n">153</span><span class="c"></span></div>
<div class="a l" style="top:19px"><span class="n">154</span><span class="c">            <span class="g">// Move the ball</span></span></div>
<div class="a l" style="top:38px"><span class="n">155</span><span class="c">            <span class="k">float</span> factor = ballSpeed *</span></div>
<div class="a l" style="top:57px"><span class="n">156</span><span class="c">            ball.move(std::cos(ballAng</span></div>
<div class="a l" style="top:76px"><span class="n">157</span><span class="c"></span></div>
<div class="a l" style="top:95px"><span class="n">158</span><span class="c">            <span class="g">// Check collisions betwee</span></span></div>
<div class="a l" style="top:114px"><span class="n">159</span><span class="c">            <span class="k2">if</span> (ball.getPosition().<span class="v">x</span> -</span></div>
<div class="a l" style="top:133px"><span class="n">160</span><span class="c">            {</span></div>
<div class="a l" style="top:152px"><span class="n">161</span><span class="c">                isPlaying = <span class="k">false</span>;</span></div>
<div class="a l" style="top:171px"><span class="n" style="color:#c6c6c6">162</span><span class="c">                pauseMessage.setString</span></div>
<div class="a l" style="top:190px"><span class="n">163</span><span class="c">            }</span></div>
<div class="a l" style="top:209px"><span class="n">164</span><span class="c">            <span class="k2">if</span> (ball.getPosition().<span class="v">x</span> +</span></div>
<div class="a l" style="top:228px"><span class="n">165</span><span class="c">            {</span></div>
<div class="a l" style="top:247px"><span class="n">166</span><span class="c">                isPlaying = <span class="k">false</span>;</span></div>
<div class="a l" style="top:266px"><span class="n">167</span><span class="c">                pauseMessage.setString</span></div>
<div class="a l" style="top:285px"><span class="n">168</span><span class="c">            }</span></div>
<div class="a l" style="top:304px"><span class="n">169</span><span class="c">            <span class="k2">if</span> (ball.getPosition().<span class="v">y</span> -</span></div>
<div class="a l" style="top:323px"><span class="n">170</span><span class="c">            {</span></div>
<svg style="left:5.5px;top:175.6px" width="9.6" height="9.8" viewBox="0 0 11 11"><path d="M0.5 0.5H6L10.5 5.5L6 10.5H0.5Z" fill="#ffcc00" stroke="#e8a317" stroke-width="1"/><circle cx="4.6" cy="5.5" r="3" fill="#e51400"/></svg>
</div>
<!-- editor tab strip -->
<div class="a" style="left:350px;top:19px;width:359px;height:34px;background:#252526"></div>
<div class="a" style="left:350px;top:19px;width:120px;height:34px;background:#1e1e1e"></div>
<svg style="left:364.6px;top:31.3px" width="12" height="12" viewBox="0 0 12 12"><path d="M7.4 2.4A4 4 0 1 0 7.4 9.2" fill="none" stroke="#6aaed0" stroke-width="2.8"/><path d="M6 5.8H12M8.2 4.2V7.4" stroke="#6aaed0" stroke-width="1.3"/></svg>
<div class="a" style="left:382.5px;top:29.2px;font-size:13px;color:#fff;line-height:18px;letter-spacing:0.05px">pong.cpp</div>
<!-- floating debug toolbar -->
<div class="a" style="left:435px;top:19px;width:215px;height:32px;background:#333;box-shadow:0 2px 5px rgba(0,0,0,0.75)"></div>
<svg style="left:447px;top:30px" width="6" height="10" viewBox="0 0 6 10"><g fill="#6f6f6f"><rect x="0" y="0" width="2" height="2"/><rect x="4" y="0" width="2" height="2"/><rect x="0" y="4" width="2" height="2"/><rect x="4" y="4" width="2" height="2"/><rect x="0" y="8" width="2" height="2"/><rect x="4" y="8" width="2" height="2"/></g></svg>
<!-- continue -->
<svg style="left:469px;top:30px" width="11" height="10" viewBox="0 0 11 10"><rect x="0" y="0" width="2" height="10" fill="#75beff"/><path d="M4 0L11 5L4 10Z" fill="#75beff"/></svg>
<!-- step over -->
<svg style="left:498px;top:28px" width="16" height="14" viewBox="0 0 16 14"><path d="M1.2 7.5A6 6 0 0 1 12.5 5.2" fill="none" stroke="#75beff" stroke-width="2.2"/><path d="M14.8 0.8V7H8.6Z" fill="#75beff"/><rect x="5.6" y="10" width="3.6" height="3.6" rx="1" fill="#d4d4d4"/></svg>
<!-- step into -->
<svg style="left:533px;top:27px" width="10" height="15" viewBox="0 0 10 15"><path d="M5 0V7" stroke="#75beff" stroke-width="2.2"/><path d="M0.3 4.6L5 9.6L9.7 4.6" fill="none" stroke="#75beff" stroke-width="2.2"/><rect x="3.2" y="11" width="3.6" height="3.6" rx="1" fill="#d4d4d4"/></svg>
<!-- step out -->
<svg style="left:565px;top:27px" width="10" height="15" viewBox="0 0 10 15"><path d="M5 2V9.5" stroke="#75beff" stroke-width="2.2"/><path d="M0.3 5.4L5 0.6L9.7 5.4" fill="none" stroke="#75beff" stroke-width="2.2"/><rect x="3.2" y="11" width="3.6" height="3.6" rx="1" fill="#d4d4d4"/></svg>
<!-- restart -->
<svg style="left:595px;top:27px" width="15" height="15" viewBox="0 0 15 15"><path d="M3.4 4.2A5.4 5.4 0 1 1 2.4 8.6" fill="none" stroke="#89d185" stroke-width="2.2"/><path d="M0.6 1V6.6H6.2Z" fill="#89d185"/></svg>
<!-- disconnect -->
<div class="a" style="left:628px;top:29px;width:12px;height:12px;background:#f48771"></div>
<svg style="left:630px;top:30px" width="8" height="10" viewBox="0 0 8 10"><path d="M1 2.5H7V4.5Q7 7 4.8 7V10H3.2V7Q1 7 1 4.5Z" fill="#2b1a14"/><path d="M2.5 0V3M5.5 0V3" stroke="#2b1a14" stroke-width="1.2"/></svg>
<!-- bottom panel -->
<div class="a" style="left:350px;top:395.5px;width:359px;height:108px;background:#1e1e1e;border-top:1px solid #3c3c3c"></div>
<div class="a" style="left:370px;top:406.6px;font-size:11px;color:#8f8f8f;line-height:16px;letter-spacing:-0.94px">PROBLEMS</div>
<div class="a" style="left:444px;top:406.6px;font-size:11px;color:#8f8f8f;line-height:16px;letter-spacing:-0.7px">OUTPUT</div>
<div class="a" style="left:505px;top:406.6px;font-size:11px;color:#e7e7e7;line-height:16px;letter-spacing:-0.83px">DEBUG CONSOLE</div>
<div class="a" style="left:611px;top:406.6px;font-size:11px;color:#8f8f8f;line-height:16px;letter-spacing:-0.62px">TERMINAL</div>
<div class="a" style="left:505px;top:428px;width:85px;height:1px;background:#7a7a7a"></div>
<div class="a" style="left:350px;top:485px;width:359px;height:1px;background:#353535"></div>
<svg style="left:359px;top:491px" width="7" height="10" viewBox="0 0 7 10"><path d="M1 1L5.5 5L1 9" fill="none" stroke="#d0d0d0" stroke-width="1.8"/></svg>
<!-- status bar (debugging) -->
<div class="a" style="left:0;top:503.5px;width:709px;height:1.5px;background:#cc6633"></div>
</div>
</body></html>
